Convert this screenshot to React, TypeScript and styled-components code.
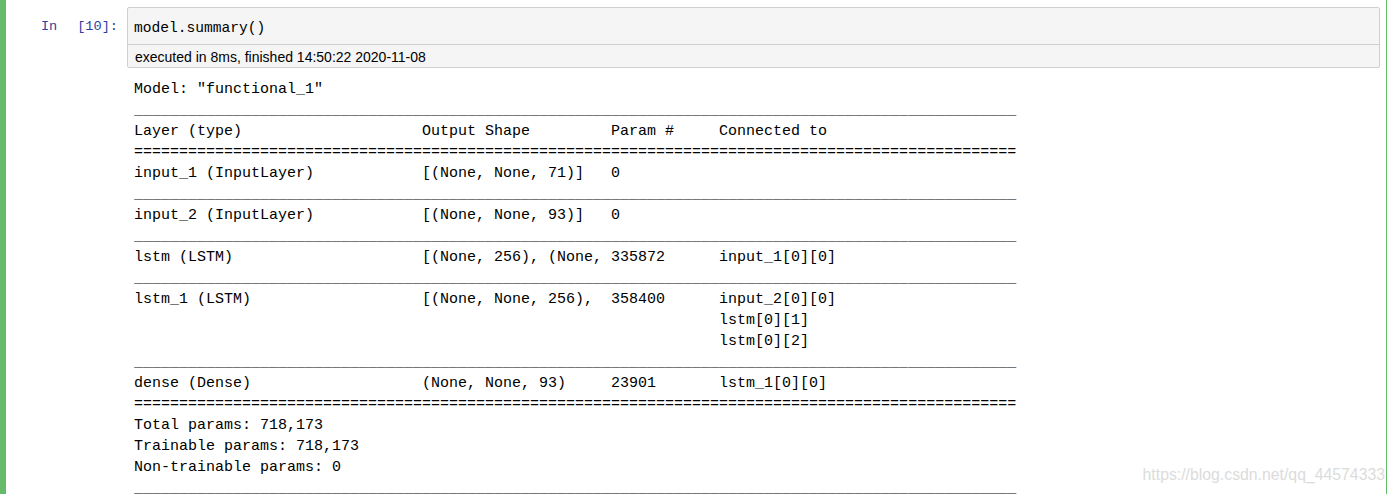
import React from "react";
import styled, { createGlobalStyle } from "styled-components";

const GlobalStyle = createGlobalStyle`
  html, body {
    margin: 0;
    padding: 0;
    background: #ffffff;
  }
  body {
    font-family: "Liberation Sans", Arial, sans-serif;
    overflow: hidden;
  }
`;

const Page = styled.div`
  position: relative;
  width: 1394px;
  height: 494px;
  overflow: hidden;
  background: #ffffff;
`;

const Cell = styled.div`
  display: flex;
  flex-direction: column;
  width: 1387px;
  min-height: 494px;
  box-sizing: border-box;
  border-left: 6px solid #66bb6a;
  border-right: 1px solid #66bb6a;
  padding: 7px 6px 0 0;
`;

const Row = styled.div`
  display: flex;
  align-items: flex-start;
`;

const Prompt = styled.div`
  flex: 0 0 121px;
  box-sizing: border-box;
  display: flex;
  justify-content: flex-end;
  gap: 20px;
  padding: 11px 9px 0 0;
  font-family: "Liberation Mono", "DejaVu Sans Mono", monospace;
  font-size: 13.6px;
  line-height: 18px;
  color: #303f9f;
`;

const InputBox = styled.div`
  flex: 1;
  border: 1px solid #cfcfcf;
  border-radius: 2px;
  background: #f5f5f5;
  overflow: hidden;
`;

const Code = styled.div`
  padding: 10px 6px 6px;
  font-family: "Liberation Mono", "DejaVu Sans Mono", monospace;
  font-size: 14.6px;
  line-height: 20px;
  color: #000;
  white-space: pre;
`;

const ExecInfo = styled.div`
  border-top: 1px solid #cfcfcf;
  padding: 4px 7px 2px 7px;
  font-family: "Liberation Sans", Arial, sans-serif;
  font-size: 14px;
  line-height: 16px;
  color: #000;
`;

const OutputArea = styled.div`
  flex: 1;
  padding: 11px 0 0 7px;
`;

const Summary = styled.div`
  font-family: "Liberation Mono", "DejaVu Sans Mono", monospace;
  font-size: 15px;
  line-height: 21px;
  color: #000;
  white-space: pre;
`;

const Line = styled.div`
  height: 21px;
`;

const Rule = styled.div`
  height: 21px;
  overflow: hidden;
`;

const LayerRow = styled.div`
  display: grid;
  grid-template-columns: 32ch 21ch 12ch 33ch;
`;

const CellText = styled.div`
  white-space: pre;
  overflow: hidden;
`;

const Watermark = styled.div`
  position: absolute;
  right: 9px;
  top: 465px;
  font-family: "Liberation Sans", Arial, sans-serif;
  font-size: 15.8px;
  line-height: 20px;
  color: #dcdcdc;
`;

type Layer = {
  name: string;
  shape: string;
  params: string;
  connected: string[];
};

const layers: Layer[] = [
  { name: "input_1 (InputLayer)", shape: "[(None, None, 71)]", params: "0", connected: [""] },
  { name: "input_2 (InputLayer)", shape: "[(None, None, 93)]", params: "0", connected: [""] },
  { name: "lstm (LSTM)", shape: "[(None, 256), (None,", params: "335872", connected: ["input_1[0][0]"] },
  {
    name: "lstm_1 (LSTM)",
    shape: "[(None, None, 256),",
    params: "358400",
    connected: ["input_2[0][0]", "lstm[0][1]", "lstm[0][2]"],
  },
  { name: "dense (Dense)", shape: "(None, None, 93)", params: "23901", connected: ["lstm_1[0][0]"] },
];

const underscores = "_".repeat(98);
const equals = "=".repeat(98);

export default function App() {
  return (
    <Page>
      <GlobalStyle />
      <Cell>
        <Row>
          <Prompt>
            <span>In</span>
            <span>[10]:</span>
          </Prompt>
          <InputBox>
            <Code>model.summary()</Code>
            <ExecInfo>executed in 8ms, finished 14:50:22 2020-11-08</ExecInfo>
          </InputBox>
        </Row>
        <Row>
          <Prompt />
          <OutputArea>
            <Summary>
              <Line>Model: "functional_1"</Line>
              <Rule>{underscores}</Rule>
              <LayerRow>
                <CellText>Layer (type)</CellText>
                <CellText>Output Shape</CellText>
                <CellText>Param #</CellText>
                <CellText>Connected to</CellText>
              </LayerRow>
              <Rule>{equals}</Rule>
              {layers.map((l, i) => (
                <React.Fragment key={l.name}>
                  <LayerRow>
                    <CellText>{l.name}</CellText>
                    <CellText>{l.shape}</CellText>
                    <CellText>{l.params}</CellText>
                    <CellText>
                      {l.connected.map((c, j) => (
                        <Line key={j}>{c}</Line>
                      ))}
                    </CellText>
                  </LayerRow>
                  <Rule>{i === layers.length - 1 ? equals : underscores}</Rule>
                </React.Fragment>
              ))}
              <Line>Total params: 718,173</Line>
              <Line>Trainable params: 718,173</Line>
              <Line>Non-trainable params: 0</Line>
              <Rule>{underscores}</Rule>
            </Summary>
          </OutputArea>
        </Row>
      </Cell>
      <Watermark>https://blog.csdn.net/qq_44574333</Watermark>
    </Page>
  );
}
